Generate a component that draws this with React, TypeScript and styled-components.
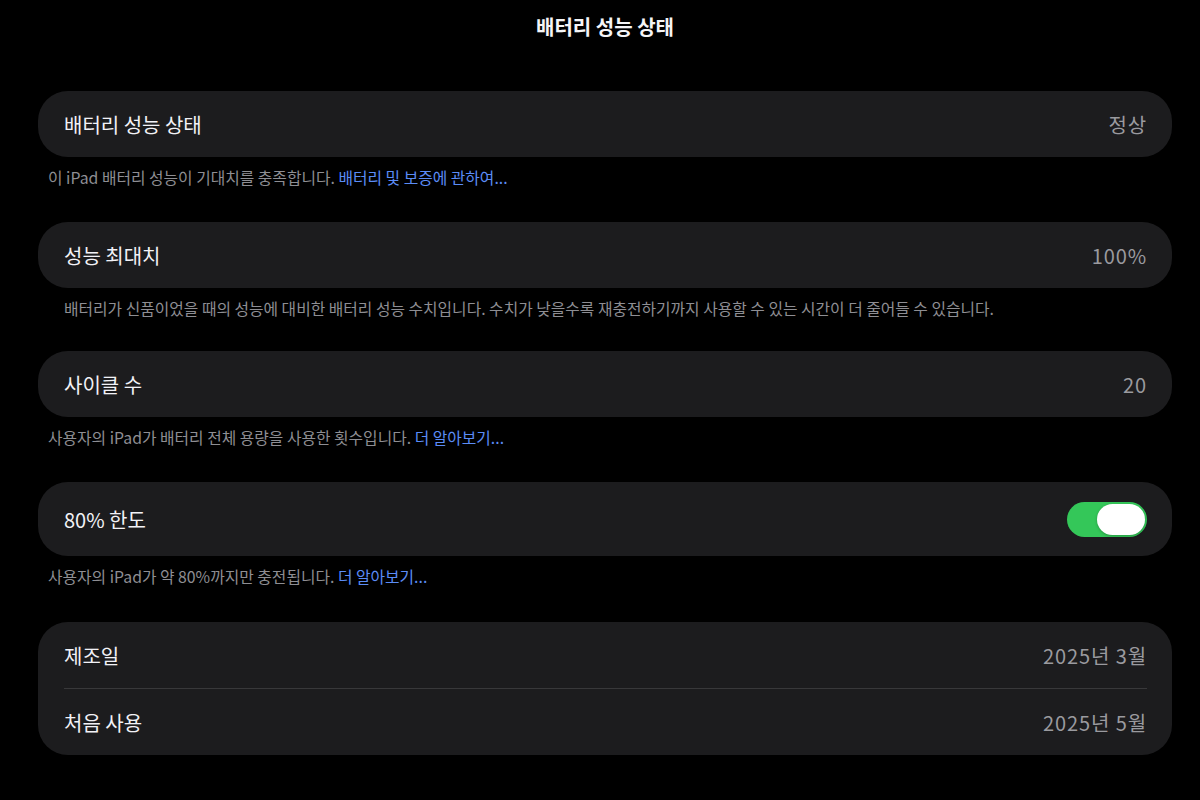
import React from 'react';
import styled, { createGlobalStyle } from 'styled-components';

const GlobalStyle = createGlobalStyle`
  html, body {
    margin: 0;
    padding: 0;
    background: #000;
  }
  body {
    font-family: "Noto Sans CJK KR", "Noto Sans", "Liberation Sans", sans-serif;
    color: #fff;
    -webkit-font-smoothing: antialiased;
  }
`;

const Page = styled.div`
  width: 1200px;
  height: 800px;
  box-sizing: border-box;
  padding: 13px 28px 0 38px;
  display: flex;
  flex-direction: column;
  overflow: hidden;
`;

const Title = styled.h1`
  margin: 0 0 50px;
  height: 28px;
  line-height: 28px;
  text-align: center;
  font-size: 20px;
  font-weight: 700;
  color: #f5f5f7;
`;

const Section = styled.section<{ $gap?: number }>`
  display: flex;
  flex-direction: column;
  margin-bottom: ${(p) => p.$gap ?? 35}px;
`;

const Card = styled.div`
  background: #1c1c1e;
  border-radius: 30px;
  padding: 0 25px 0 26px;
  display: flex;
  flex-direction: column;
`;

const Row = styled.div<{ $tall?: boolean }>`
  height: ${(p) => (p.$tall ? 74 : 66)}px;
  display: flex;
  align-items: center;
  justify-content: space-between;
  font-size: 20px;
`;

const Divider = styled.div`
  height: 1px;
  background: #38383a;
`;

const Label = styled.span`
  color: #f2f2f7;
`;

const Value = styled.span`
  color: #9a9a9f;
  letter-spacing: 0.9px;
`;

const Footer = styled.p<{ $indent?: boolean }>`
  margin: 12px 0 0;
  padding-left: ${(p) => (p.$indent ? 26 : 10)}px;
  font-size: 15.8px;
  line-height: 18px;
  color: #8e8e93;
  white-space: nowrap;
`;

const Link = styled.a`
  color: #5b8cf6;
  text-decoration: none;
`;

const Switch = styled.div`
  width: 80px;
  height: 35px;
  border-radius: 18px;
  background: #34c759;
  display: flex;
  align-items: center;
  justify-content: flex-end;
  padding: 0 2px;
  box-sizing: border-box;
`;

const Knob = styled.div`
  width: 48px;
  height: 31px;
  border-radius: 16px;
  background: #fff;
  box-shadow: 0 1px 3px rgba(0, 0, 0, 0.25);
`;

export default function App() {
  return (
    <>
      <GlobalStyle />
      <Page>
        <Title>배터리 성능 상태</Title>

        <Section>
          <Card>
            <Row>
              <Label>배터리 성능 상태</Label>
              <Value>정상</Value>
            </Row>
          </Card>
          <Footer>
            이 iPad 배터리 성능이 기대치를 충족합니다. <Link>배터리 및 보증에 관하여...</Link>
          </Footer>
        </Section>

        <Section $gap={33}>
          <Card>
            <Row>
              <Label>성능 최대치</Label>
              <Value>100%</Value>
            </Row>
          </Card>
          <Footer $indent>
            배터리가 신품이었을 때의 성능에 대비한 배터리 성능 수치입니다. 수치가 낮을수록 재충전하기까지 사용할 수 있는 시간이 더 줄어들 수 있습니다.
          </Footer>
        </Section>

        <Section>
          <Card>
            <Row>
              <Label>사이클 수</Label>
              <Value>20</Value>
            </Row>
          </Card>
          <Footer>
            사용자의 iPad가 배터리 전체 용량을 사용한 횟수입니다. <Link>더 알아보기...</Link>
          </Footer>
        </Section>

        <Section $gap={36}>
          <Card>
            <Row $tall>
              <Label>80% 한도</Label>
              <Switch>
                <Knob />
              </Switch>
            </Row>
          </Card>
          <Footer>
            사용자의 iPad가 약 80%까지만 충전됩니다. <Link>더 알아보기...</Link>
          </Footer>
        </Section>

        <Section>
          <Card>
            <Row>
              <Label>제조일</Label>
              <Value>2025년 3월</Value>
            </Row>
            <Divider />
            <Row>
              <Label>처음 사용</Label>
              <Value>2025년 5월</Value>
            </Row>
          </Card>
        </Section>
      </Page>
    </>
  );
}
